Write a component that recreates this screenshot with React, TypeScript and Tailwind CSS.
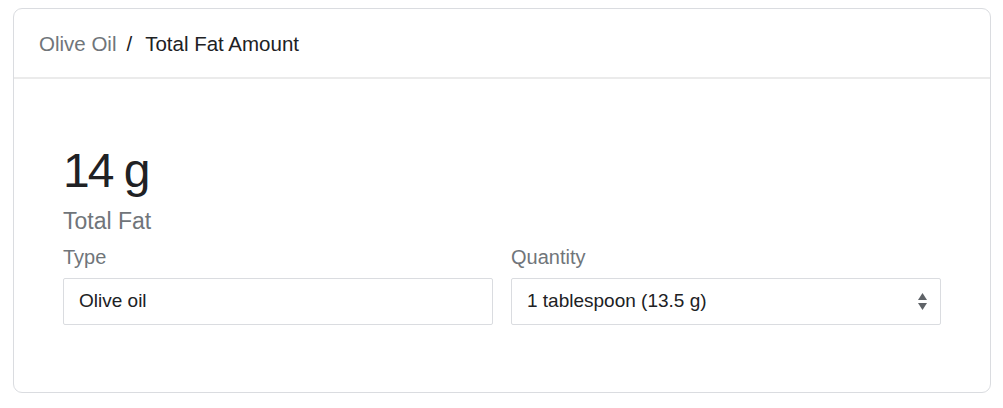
const App = () => {
  return (
    <div className="bg-white w-[1003px] h-[408px] pl-[13px] pr-[12px] pt-[8px] font-['Liberation_Sans',Arial,sans-serif]">
      <section className="h-[385px] border border-[#dadce0] rounded-[9px] bg-white">
        <div className="h-[70px] flex items-center pl-[25px] pt-[3px] text-[20.5px] border-b-2 border-[#ebebeb]">
          <span className="text-[#70757a]">Olive Oil</span>
          <span className="text-[#202124] ml-[10px] mr-[13px]">/</span>
          <span className="text-[#202124]">Total Fat Amount</span>
        </div>
        <div className="px-[49px] pt-[64px]">
          <div className="text-[48px] leading-[56px] tracking-[-2px] text-[#202124]">14 g</div>
          <div className="text-[23px] leading-[28px] text-[#70757a] mt-[8px]">Total Fat</div>
          <div className="grid grid-cols-2 gap-[18px] mt-[10px]">
            <div>
              <label className="block text-[20px] leading-[24px] text-[#70757a]">Type</label>
              <div className="mt-[9px] h-[47px] border border-[#dadce0] rounded-[2px] flex items-center pl-[15px] text-[19px] text-[#202124]">
                Olive oil
              </div>
            </div>
            <div>
              <label className="block text-[20px] leading-[24px] text-[#70757a]">Quantity</label>
              <div className="mt-[9px] h-[47px] border border-[#dadce0] rounded-[2px] flex items-center justify-between pl-[15px] pr-[13px] text-[19px] text-[#202124]">
                <span>1 tablespoon (13.5 g)</span>
                <svg width="9" height="17" viewBox="0 0 9 17" className="fill-[#5f6368]">
                  <path d="M4.5 0 L9 7 L0 7 Z" />
                  <path d="M4.5 17 L9 10 L0 10 Z" />
                </svg>
              </div>
            </div>
          </div>
        </div>
      </section>
    </div>
  );
};

export default App;
